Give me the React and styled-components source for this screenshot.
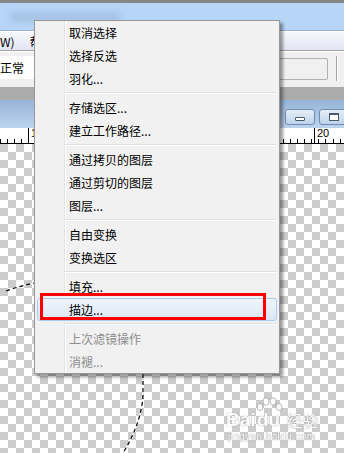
import React from 'react'
import styled, { createGlobalStyle } from 'styled-components'

const GlobalStyle = createGlobalStyle`
  html, body { margin: 0; padding: 0; background: #fff; }
  body {
    width: 344px;
    height: 453px;
    overflow: hidden;
    font-family: "Noto Sans CJK SC", "Noto Sans", sans-serif;
  }
`

const Screen = styled.div`
  position: relative;
  width: 344px;
  height: 453px;
  overflow: hidden;
  display: flex;
  flex-direction: column;
`

const TitleBar = styled.div`
  height: 31px;
  flex-shrink: 0;
  box-sizing: border-box;
  border-top: 3px solid #868686;
  border-bottom: 1px solid #9fb2cc;
  background: #b6d5f7;
  padding: 9px 0 0 10px;
`

const BlurTitle = styled.div`
  width: 110px;
  height: 10px;
  background: #9fbbdc;
  filter: blur(3px);
  opacity: 0.7;
`

const MenuBar = styled.div`
  height: 19px;
  flex-shrink: 0;
  display: flex;
  align-items: center;
  gap: 15px;
  background: linear-gradient(#f7f8fc, #e1e5f2);
  border-top: 1px solid #fff;
  box-sizing: border-box;
  font-size: 12px;
  color: #000;
  white-space: nowrap;
`

const BarItem = styled.span`
  margin-left: ${p => p.$shift || 0}px;
`

const OptionsBar = styled.div`
  height: 37px;
  flex-shrink: 0;
  box-sizing: border-box;
  border-top: 1px solid #a3a3a3;
  box-shadow: inset 0 1px 0 #fff;
  background: #f0f0f0;
  display: flex;
  align-items: flex-start;
`

const ModeBox = styled.div`
  margin-top: 5px;
  width: 70px;
  height: 23px;
  background: #fff;
  font-size: 12px;
  line-height: 23px;
`

const Spacer = styled.div`
  flex: 1;
`

const FieldBox = styled.div`
  margin-top: 7px;
  width: 49px;
  height: 22px;
  box-sizing: border-box;
  border: 1px solid #b2b2b2;
  border-radius: 2px;
  background: #f0f0f0;
`

const VRule = styled.div`
  margin: 5px 7px 0 8px;
  width: 1px;
  height: 25px;
  background: #a6a6a6;
  box-shadow: 1px 0 0 #fff;
`

const GrayBand = styled.div`
  height: 13px;
  flex-shrink: 0;
  background: #ababab;
`

const DocBar = styled.div`
  height: 28px;
  flex-shrink: 0;
  background: linear-gradient(#97b5d8, #bcd3ed);
  display: flex;
  justify-content: flex-end;
  align-items: flex-start;
  padding-top: 9px;
  box-sizing: border-box;
  gap: 4px;
`

const WinButton = styled.div`
  width: 30px;
  height: 16px;
  box-sizing: border-box;
  border: 1px solid #6f8db3;
  border-radius: 3px;
  background: linear-gradient(#e6eef8, #bfd2e9);
  display: flex;
  align-items: center;
  justify-content: center;
  margin-right: ${p => p.$last ? -5 : 0}px;
`

const MinGlyph = styled.div`
  width: 10px;
  height: 4px;
  box-sizing: border-box;
  border: 1px solid #4b5b70;
  border-radius: 1px;
  background: #fff;
  margin-top: 4px;
`

const RestoreGlyph = styled.div`
  width: 10px;
  height: 8px;
  box-sizing: border-box;
  border: 1px solid #4b5b70;
  border-top-width: 2px;
  background: #fff;
`

const Ruler = styled.div`
  height: 16px;
  flex-shrink: 0;
  box-sizing: border-box;
  border-bottom: 1px solid #000;
  background-color: #fff;
  background-image: repeating-linear-gradient(to right, #000 0 1px, transparent 1px 7.075px);
  background-size: 100% 4px;
  background-position: 0 100%;
  background-repeat: no-repeat;
  display: flex;
  padding-left: 28px;
`

const Mark = styled.div`
  width: 283px;
  flex-shrink: 0;
  border-left: 1px solid #000;
  padding-left: 2px;
  font-family: "Liberation Sans", Arial, sans-serif;
  font-size: 11px;
  line-height: 11px;
  color: #000;
`

const Canvas = styled.div`
  flex: 1;
  background-color: #fff;
  background-image:
    linear-gradient(45deg, #cccccc 25%, transparent 25%, transparent 75%, #cccccc 75%),
    linear-gradient(45deg, #cccccc 25%, transparent 25%, transparent 75%, #cccccc 75%);
  background-size: 16px 16px;
  background-position: 8px 0, 16px 8px;
`

const Ants = styled.svg`
  position: absolute;
  left: 0;
  top: 0;
  pointer-events: none;
`

const Menu = styled.div`
  position: absolute;
  left: 34px;
  top: 20px;
  width: 246px;
  box-sizing: border-box;
  border: 1px solid #979797;
  background: linear-gradient(to right,
    #f1f1f1 0 29px, #e2e3e3 29px 30px, #ffffff 30px 31px, #f1f1f1 31px);
  box-shadow: 3px 3px 3px rgba(0, 0, 0, 0.4);
  font-size: 12px;
`

const Item = styled.div`
  height: 23px;
  line-height: 21px;
  box-sizing: border-box;
  padding-left: ${p => p.$hot ? 31 : 34}px;
  margin: ${p => p.$hot ? '0 2px' : '0'};
  border: 1px solid ${p => p.$hot ? '#a9cbf2' : 'transparent'};
  ${p => !p.$hot && 'border-left: 0; border-right: 0;'}
  border-radius: 3px;
  background: ${p => p.$hot ? 'linear-gradient(#f0f5fb, #dbe6f4)' : 'transparent'};
  color: ${p => p.$off ? '#8d8d8d' : '#000'};
  white-space: nowrap;
`

const Separator = styled.div`
  height: 6px;
  padding-top: 2px;
  box-sizing: border-box;
  &::after {
    content: '';
    display: block;
    margin: 0 2px 0 29px;
    border-top: 1px solid #e0e0e0;
    border-bottom: 1px solid #fff;
  }
`

const Callout = styled.div`
  position: absolute;
  left: 40px;
  top: 293px;
  width: 226px;
  height: 27px;
  box-sizing: border-box;
  border: 3px solid #ff0000;
`

const Watermark = styled.div`
  position: absolute;
  left: 226px;
  top: 397px;
  display: flex;
  flex-direction: column;
  align-items: flex-start;
  color: #fff;
  opacity: 0.9;
  text-shadow: 0 0 1px #9a9a9a, 0 0 1px #9a9a9a;
`

const LogoRow = styled.div`
  display: flex;
  align-items: flex-end;
`

const LogoWord = styled.span`
  font-family: "Liberation Sans", Arial, sans-serif;
  font-weight: bold;
  font-size: 19px;
  line-height: 18px;
`

const PawWrap = styled.span`
  display: inline-flex;
  flex-direction: column;
  align-items: center;
  margin-left: -2px;
`

const LogoCn = styled.span`
  font-size: 16px;
  line-height: 18px;
  margin-left: 3px;
`

const Url = styled.span`
  font-family: "Liberation Sans", Arial, sans-serif;
  font-size: 10px;
  line-height: 12px;
  letter-spacing: 0.4px;
  margin: 2px 0 0 2px;
`

const menu = [
  ['取消选择'], ['选择反选'], ['羽化...'], null,
  ['存储选区...'], ['建立工作路径...'], null,
  ['通过拷贝的图层'], ['通过剪切的图层'], ['图层...'], null,
  ['自由变换'], ['变换选区'], null,
  ['填充...'], ['描边...', 'hot'], null,
  ['上次滤镜操作', 'off'], ['消褪...', 'off'],
]

export default function App() {
  return (
    <Screen>
      <GlobalStyle />
      <TitleBar><BlurTitle /></TitleBar>
      <MenuBar>
        <BarItem $shift={-28}>窗口(W)</BarItem>
        <BarItem>帮助(H)</BarItem>
      </MenuBar>
      <OptionsBar>
        <ModeBox>正常</ModeBox>
        <Spacer />
        <FieldBox />
        <VRule />
      </OptionsBar>
      <GrayBand />
      <DocBar>
        <WinButton><MinGlyph /></WinButton>
        <WinButton $last><RestoreGlyph /></WinButton>
      </DocBar>
      <Ruler>
        <Mark>10</Mark>
        <Mark>20</Mark>
      </Ruler>
      <Canvas />

      <Ants width="344" height="453">
        <g fill="none" strokeWidth="1.2">
          <path d="M6 291 Q20 286 34 283" stroke="#fff" />
          <path d="M6 291 Q20 286 34 283" stroke="#000" strokeDasharray="4 3" />
          <path d="M143 374 L143 396 Q141 424 123 453" stroke="#fff" />
          <path d="M143 374 L143 396 Q141 424 123 453" stroke="#000" strokeDasharray="4 3" />
        </g>
      </Ants>

      <Watermark>
        <LogoRow>
          <LogoWord>Bai</LogoWord>
          <PawWrap>
            <svg width="30" height="14" viewBox="0 0 30 14">
              <g fill="#fff" stroke="#a0a0a0" strokeWidth="0.8">
                <ellipse cx="6" cy="10" rx="3" ry="3.5" />
                <ellipse cx="12" cy="4.5" rx="3" ry="3.8" />
                <ellipse cx="19" cy="4.5" rx="3" ry="3.8" />
                <ellipse cx="25" cy="10" rx="3" ry="3.5" />
              </g>
            </svg>
            <LogoWord>du</LogoWord>
          </PawWrap>
          <LogoCn>经验</LogoCn>
        </LogoRow>
        <Url>jingyan.baidu.com</Url>
      </Watermark>

      <Menu>
        {menu.map((m, i) =>
          m ? (
            <Item key={i} $hot={m[1] === 'hot'} $off={m[1] === 'off'}>{m[0]}</Item>
          ) : (
            <Separator key={i} />
          )
        )}
      </Menu>
      <Callout />
    </Screen>
  )
}
